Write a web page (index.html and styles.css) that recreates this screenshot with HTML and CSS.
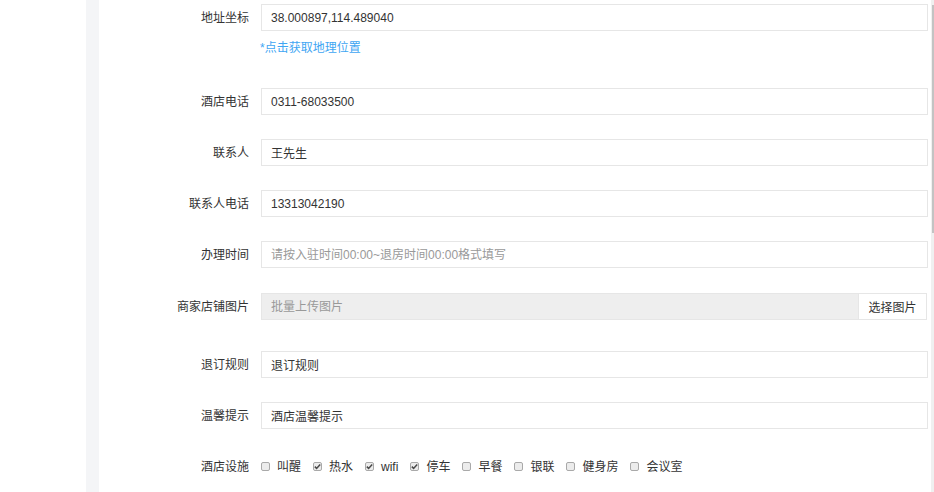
FILE: index.html
```html
<!DOCTYPE html>
<html lang="zh-CN">
<head>
<meta charset="utf-8">
<title>酒店信息</title>
<link rel="stylesheet" href="styles.css">
</head>
<body>
<div class="page">
  <div class="side"></div>
  <div class="gutter"></div>
  <div class="main">
    <form class="form">
      <div class="field">
        <div class="row">
          <label class="label">地址坐标</label>
          <input class="input" type="text" value="38.000897,114.489040">
        </div>
        <div class="hint">*点击获取地理位置</div>
      </div>
      <div class="row">
        <label class="label">酒店电话</label>
        <input class="input" type="text" value="0311-68033500">
      </div>
      <div class="row">
        <label class="label">联系人</label>
        <input class="input" type="text" value="王先生">
      </div>
      <div class="row">
        <label class="label">联系人电话</label>
        <input class="input" type="text" value="13313042190">
      </div>
      <div class="row">
        <label class="label">办理时间</label>
        <input class="input" type="text" placeholder="请按入驻时间00:00~退房时间00:00格式填写">
      </div>
      <div class="row row-upload">
        <label class="label">商家店铺图片</label>
        <div class="upload">
          <input class="input input-disabled" type="text" placeholder="批量上传图片" disabled>
          <button class="btn" type="button">选择图片</button>
        </div>
      </div>
      <div class="row">
        <label class="label">退订规则</label>
        <input class="input" type="text" value="退订规则">
      </div>
      <div class="row">
        <label class="label">温馨提示</label>
        <input class="input" type="text" value="酒店温馨提示">
      </div>
      <div class="row">
        <label class="label">酒店设施</label>
        <div class="checks">
          <span class="check"><span class="box"></span>叫醒</span>
          <span class="check"><span class="box checked"><svg viewBox="0 0 9 9" width="9" height="9"><path d="M1.8 4.6 L3.6 6.4 L7.2 2.4" fill="none" stroke="#4a4a4a" stroke-width="1.5"/></svg></span>热水</span>
          <span class="check"><span class="box checked"><svg viewBox="0 0 9 9" width="9" height="9"><path d="M1.8 4.6 L3.6 6.4 L7.2 2.4" fill="none" stroke="#4a4a4a" stroke-width="1.5"/></svg></span>wifi</span>
          <span class="check"><span class="box checked"><svg viewBox="0 0 9 9" width="9" height="9"><path d="M1.8 4.6 L3.6 6.4 L7.2 2.4" fill="none" stroke="#4a4a4a" stroke-width="1.5"/></svg></span>停车</span>
          <span class="check"><span class="box"></span>早餐</span>
          <span class="check"><span class="box"></span>银联</span>
          <span class="check"><span class="box"></span>健身房</span>
          <span class="check"><span class="box"></span>会议室</span>
        </div>
      </div>
    </form>
  </div>
  <div class="scrollbar"><div class="thumb"></div></div>
</div>
</body>
</html>
```

FILE: styles.css
```css
* { box-sizing: border-box; }
html, body { margin: 0; padding: 0; background: #fff; }
body {
  font-family: "Liberation Sans", "Noto Sans CJK SC", sans-serif;
  font-size: 12px;
  color: #333;
}
.page {
  display: flex;
  height: 492px;
  overflow: hidden;
}
.side { width: 86px; flex: none; background: #fff; }
.gutter { width: 13px; flex: none; background: #f4f5f7; }
.main { flex: 1; background: #fff; }
.scrollbar {
  width: 3px;
  flex: none;
  background: #f0f0f0;
  padding-left: 1px;
  padding-top: 5px;
}
.thumb { width: 2px; height: 228px; background: #c3c3c3; }

.form {
  display: flex;
  flex-direction: column;
  gap: 24px;
  padding-top: 4px;
  margin: 0;
}
.row {
  display: flex;
  align-items: center;
  height: 27px;
}
.row-upload { margin-top: 1px; margin-bottom: 7px; }
.label {
  width: 150px;
  flex: none;
  text-align: right;
  margin-right: 12px;
  color: #333;
  line-height: 16px;
}
.input {
  flex: 1;
  height: 27px;
  margin: 0 3px 0 0;
  border: 1px solid #e6e6e6;
  padding: 0 9px;
  font: inherit;
  color: #333;
  background: #fff;
  outline: none;
}
.input::placeholder { color: #999; }
.hint {
  padding: 9px 0 8px 161px;
  line-height: 16px;
  color: #40a6f3;
}
.upload {
  flex: 1;
  display: flex;
  height: 27px;
  margin-right: 4px;
}
.upload .input { margin-right: 0; }
.input-disabled { background: #eeeeee; border-right: none; }
.input-disabled::placeholder { color: #999; }
.btn {
  width: 69px;
  flex: none;
  height: 27px;
  border: 1px solid #e6e6e6;
  background: #fff;
  font: inherit;
  color: #333;
  padding: 0;
}
.checks {
  display: flex;
  align-items: center;
}
.check {
  display: flex;
  align-items: center;
  margin-right: 12px;
  color: #333;
  line-height: 16px;
}
.box {
  width: 9px;
  height: 9px;
  flex: none;
  margin-right: 7px;
  border: 1px solid #a9a9a9;
  border-radius: 2px;
  background: #ececec;
  display: flex;
  align-items: center;
  justify-content: center;
  overflow: hidden;
}
.box svg { display: block; flex: none; }
```
